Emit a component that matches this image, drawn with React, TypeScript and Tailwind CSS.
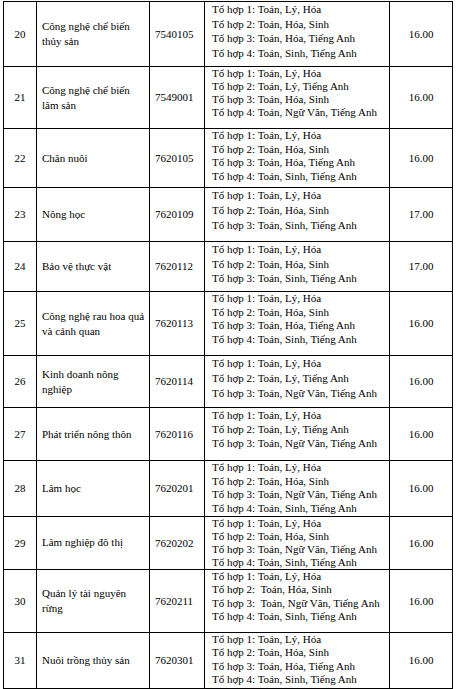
const rows = [
  { no: '20', name: ['Công nghệ chế biến', 'thủy sản'], code: '7540105', h: 'h-[65px]', lh: 'leading-[14.5px]', combos: ['Tổ hợp 1: Toán, Lý, Hóa', 'Tổ hợp 2: Toán, Hóa, Sinh', 'Tổ hợp 3: Toán, Hóa, Tiếng Anh', 'Tổ hợp 4: Toán, Sinh, Tiếng Anh'], score: '16.00' },
  { no: '21', name: ['Công nghệ chế biến', 'lâm sản'], code: '7549001', h: 'h-[62px]', lh: 'leading-[13px]', combos: ['Tổ hợp 1: Toán, Lý, Hóa', 'Tổ hợp 2: Toán, Lý, Tiếng Anh', 'Tổ hợp 3: Toán, Hóa, Sinh', 'Tổ hợp 4: Toán, Ngữ Văn, Tiếng Anh'], score: '16.00' },
  { no: '22', name: ['Chăn nuôi'], code: '7620105', h: 'h-[59px]', lh: 'leading-[13.7px]', combos: ['Tổ hợp 1: Toán, Lý, Hóa', 'Tổ hợp 2: Toán, Hóa, Sinh', 'Tổ hợp 3: Toán, Hóa, Tiếng Anh', 'Tổ hợp 4: Toán, Sinh, Tiếng Anh'], score: '16.00' },
  { no: '23', name: ['Nông học'], code: '7620109', h: 'h-[54px]', lh: 'leading-[15px]', combos: ['Tổ hợp 1: Toán, Lý, Hóa', 'Tổ hợp 2: Toán, Hóa, Sinh', 'Tổ hợp 3: Toán, Sinh, Tiếng Anh'], score: '17.00' },
  { no: '24', name: ['Bảo vệ thực vật'], code: '7620112', h: 'h-[50px]', lh: 'leading-[14.5px]', combos: ['Tổ hợp 1: Toán, Lý, Hóa', 'Tổ hợp 2: Toán, Hóa, Sinh', 'Tổ hợp 3: Toán, Sinh, Tiếng Anh'], score: '17.00' },
  { no: '25', name: ['Công nghệ rau hoa quả', 'và cảnh quan'], code: '7620113', h: 'h-[64px]', lh: 'leading-[13.5px]', combos: ['Tổ hợp 1: Toán, Lý, Hóa', 'Tổ hợp 2: Toán, Hóa, Sinh', 'Tổ hợp 3: Toán, Hóa, Tiếng Anh', 'Tổ hợp 4: Toán, Sinh, Tiếng Anh'], score: '16.00' },
  { no: '26', name: ['Kinh doanh nông', 'nghiệp'], code: '7620114', h: 'h-[52px]', lh: 'leading-[15px]', combos: ['Tổ hợp 1: Toán, Lý, Hóa', 'Tổ hợp 2: Toán, Lý, Tiếng Anh', 'Tổ hợp 3: Toán, Ngữ Văn, Tiếng Anh'], score: '16.00' },
  { no: '27', name: ['Phát triển nông thôn'], code: '7620116', h: 'h-[53px]', lh: 'leading-[14px]', combos: ['Tổ hợp 1: Toán, Lý, Hóa', 'Tổ hợp 2: Toán, Lý, Tiếng Anh', 'Tổ hợp 3: Toán, Ngữ Văn, Tiếng Anh'], score: '16.00' },
  { no: '28', name: ['Lâm học'], code: '7620201', h: 'h-[54px]', lh: 'leading-[13.7px]', combos: ['Tổ hợp 1: Toán, Lý, Hóa', 'Tổ hợp 2: Toán, Hóa, Sinh', 'Tổ hợp 3: Toán, Ngữ Văn, Tiếng Anh', 'Tổ hợp 4: Toán, Sinh, Tiếng Anh'], score: '16.00' },
  { no: '29', name: ['Lâm nghiệp đô thị'], code: '7620202', h: 'h-[53px]', lh: 'leading-[13px]', combos: ['Tổ hợp 1: Toán, Lý, Hóa', 'Tổ hợp 2: Toán, Hóa, Sinh', 'Tổ hợp 3: Toán, Ngữ Văn, Tiếng Anh', 'Tổ hợp 4: Toán, Sinh, Tiếng Anh'], score: '16.00' },
  { no: '30', name: ['Quản lý tài nguyên', 'rừng'], code: '7620211', h: 'h-[63px]', lh: 'leading-[13.5px]', combos: ['Tổ hợp 1: Toán, Lý, Hóa', 'Tổ hợp 2:  Toán, Hóa, Sinh', 'Tổ hợp 3:  Toán, Ngữ Văn, Tiếng Anh', 'Tổ hợp 4: Toán, Sinh, Tiếng Anh'], score: '16.00' },
  { no: '31', name: ['Nuôi trồng thủy sản'], code: '7620301', h: 'h-[56px]', lh: 'leading-[13.5px]', combos: ['Tổ hợp 1: Toán, Lý, Hóa', 'Tổ hợp 2: Toán, Hóa, Sinh', 'Tổ hợp 3: Toán, Hóa, Tiếng Anh', 'Tổ hợp 4: Toán, Sinh, Tiếng Anh'], score: '16.00' },
];

export default function App() {
  return (
    <div className="min-h-[689px] w-[457px] bg-white pl-[3px] pt-[1px] font-['Liberation_Serif',serif] text-[11px] text-black">
      <table className="w-[449px] table-fixed border-collapse">
        <colgroup>
          <col className="w-[33px]" />
          <col className="w-[113px]" />
          <col className="w-[55px]" />
          <col className="w-[185px]" />
          <col className="w-[63px]" />
        </colgroup>
        <tbody>
          {rows.map((r) => (
            <tr key={r.no} className={r.h}>
              <td className="border border-black text-center align-middle">{r.no}</td>
              <td className="border border-black pl-[5px] pr-0 align-middle leading-[15px]">
                {r.name.map((n) => (
                  <div key={n} className="whitespace-nowrap">{n}</div>
                ))}
              </td>
              <td className="border border-black pl-[5px] align-middle">{r.code}</td>
              <td className={`border border-black px-[7px] pt-0 align-top ${r.lh}`}>
                {r.combos.map((c) => (
                  <div key={c} className="whitespace-pre">{c}</div>
                ))}
              </td>
              <td className="border border-black text-center align-middle">{r.score}</td>
            </tr>
          ))}
        </tbody>
      </table>
    </div>
  );
}
